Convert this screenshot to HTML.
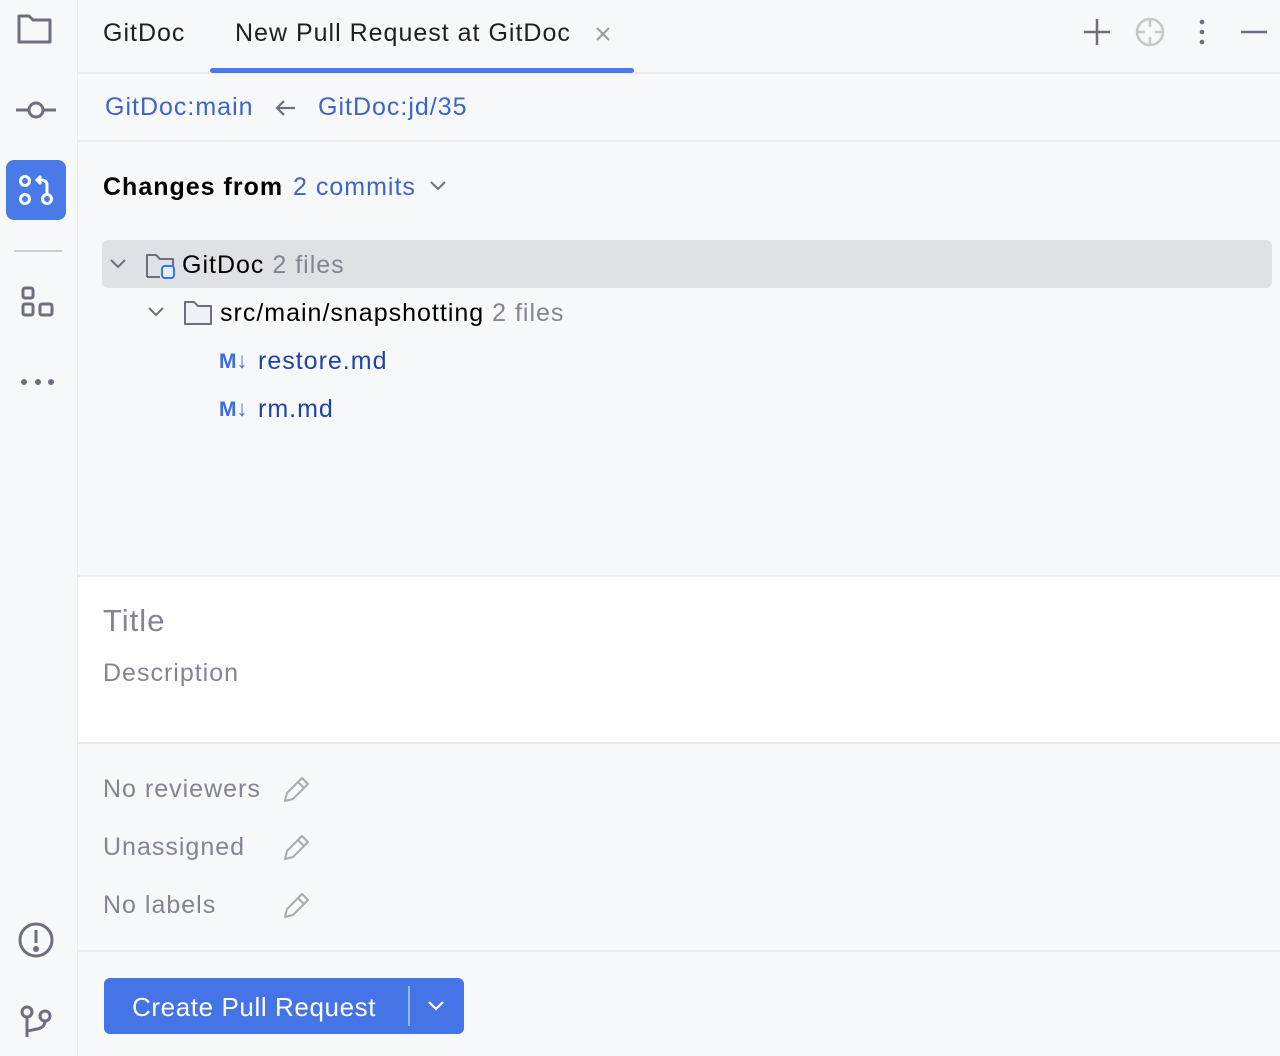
<!DOCTYPE html>
<html><head><meta charset="utf-8"><style>
*{margin:0;padding:0;box-sizing:border-box}
body{width:1280px;height:1056px;background:#f7f8fa;font-family:"Liberation Sans",sans-serif;position:relative;overflow:hidden;color:#000}
.a{position:absolute;white-space:nowrap}
.t{font-size:25px;line-height:30px;letter-spacing:1px}
.blue{color:#3b65c8}
.gray{color:#818594}
svg{position:absolute;overflow:visible}
</style></head><body>
<div class="a" style="left:77px;top:0;width:1px;height:1056px;background:#ebecf0"></div>
<div class="a" style="left:78px;top:72px;width:1202px;height:2px;background:#ebecf0"></div>
<div class="a" style="left:78px;top:140px;width:1202px;height:2px;background:#ebecf0"></div>
<div class="a" style="left:78px;top:575px;width:1202px;height:169px;background:#fff;border-top:2px solid #ebecf0;border-bottom:2px solid #ebecf0"></div>
<div class="a" style="left:78px;top:950px;width:1202px;height:2px;background:#ebecf0"></div>

<svg style="left:0;top:0" width="77" height="1056" fill="none" stroke="#6c707e" stroke-width="3">
<path d="M19 16h10l4 4h17v22H19z" stroke-linejoin="round"/>
<line x1="16" y1="110" x2="28" y2="110"/><circle cx="36" cy="110" r="7"/><line x1="44" y1="110" x2="56" y2="110"/>
<rect x="6" y="160" width="60" height="60" rx="8" fill="#4a7ae8" stroke="none"/>
<g stroke="#fff" stroke-width="3"><circle cx="25" cy="181" r="4.5"/><circle cx="25" cy="199" r="4.5"/><circle cx="47" cy="199" r="4.5"/><path d="M47 194v-9a5 5 0 0 0-5-5h-4M41 176l-4 4 4 4"/></g>
<line x1="14" y1="251" x2="62" y2="251" stroke="#c9ccd6" stroke-width="2"/>
<rect x="23" y="288" width="10" height="10" rx="2"/><rect x="23" y="304" width="10" height="11" rx="2"/><rect x="40" y="304" width="12" height="11" rx="2"/>
<g fill="#6c707e" stroke="none"><circle cx="24" cy="382" r="3"/><circle cx="38" cy="382" r="3"/><circle cx="51" cy="382" r="3"/></g>
<circle cx="36" cy="940" r="16"/><line x1="36" y1="930" x2="36" y2="943"/><circle cx="36" cy="949" r="1.5" fill="#6c707e"/>
<circle cx="27" cy="1012" r="5"/><circle cx="45" cy="1016" r="5"/><path d="M27 1017v20M45 1021c0 8-8 8-18 10"/>
</svg>

<div class="a t" style="left:103px;top:18px;color:#1e1f22">GitDoc</div>
<div class="a t" style="left:235px;top:18px;color:#1e1f22">New Pull Request at GitDoc</div>
<svg style="left:596px;top:27px" width="14" height="14" stroke="#9a9ca6" stroke-width="2"><path d="M1 1l12 12M13 1L1 13"/></svg>
<div class="a" style="left:210px;top:68px;width:424px;height:5px;background:#4a7ae8;border-radius:3px"></div>
<svg style="left:1080px;top:16px" width="190" height="34" fill="none" stroke="#6c707e" stroke-width="2.5">
<path d="M17 3v26M4 16h26"/>
<g stroke="#c5c7ce"><circle cx="70" cy="16" r="13"/><path d="M70 3v8M70 21v8M57 16h8M75 16h8"/></g>
<g fill="#6c707e" stroke="none"><circle cx="122" cy="6" r="2.3"/><circle cx="122" cy="16" r="2.3"/><circle cx="122" cy="26" r="2.3"/></g>
<path d="M161 16h26"/>
</svg>

<div class="a t blue" style="left:105px;top:92px">GitDoc:main</div>
<svg style="left:275px;top:99px" width="22" height="18" fill="none" stroke="#6c707e" stroke-width="2.2"><path d="M20 9H3M9 2L2 9l7 7"/></svg>
<div class="a t blue" style="left:318px;top:92px">GitDoc:jd/35</div>

<div class="a t" style="left:103px;top:172px;font-weight:bold">Changes from</div>
<div class="a t blue" style="left:293px;top:172px">2 commits</div>
<svg style="left:430px;top:181px" width="16" height="10" fill="none" stroke="#6c707e" stroke-width="2"><path d="M1 1l7 7 7-7"/></svg>

<div class="a" style="left:102px;top:240px;width:1170px;height:48px;background:#dfe1e5;border-radius:6px"></div>
<svg style="left:100px;top:250px" width="500" height="180" fill="none" stroke="#6c707e" stroke-width="2">
<path d="M11 10l7 7 7-7"/>
<path d="M47 27V5h9l4 4h13v8" stroke-linejoin="round"/><path d="M47 27h13"/>
<rect x="62" y="16" width="12" height="12" rx="3" fill="#e6edfd" stroke="#3574f0"/>
<path d="M49 58l7 7 7-7"/>
<path d="M85 74V52h9l4 4h13v18z" stroke-linejoin="round" fill="#f0f1f4"/>
</svg>
<div class="a t" style="left:182px;top:250px">GitDoc <span class="gray">2 files</span></div>
<div class="a t" style="left:220px;top:298px">src/main/snapshotting <span class="gray">2 files</span></div>
<div class="a" style="left:219px;top:348px;font-size:21px;font-weight:bold;color:#3d6de0">M<span style="font-size:22px">↓</span></div>
<div class="a t" style="left:258px;top:346px;color:#2043a8">restore.md</div>
<div class="a" style="left:219px;top:396px;font-size:21px;font-weight:bold;color:#3d6de0">M<span style="font-size:22px">↓</span></div>
<div class="a t" style="left:258px;top:394px;color:#2043a8">rm.md</div>

<div class="a gray" style="left:103px;top:603px;font-size:31px;line-height:36px;letter-spacing:1px">Title</div>
<div class="a t gray" style="left:103px;top:658px">Description</div>

<div class="a t gray" style="left:103px;top:774px">No reviewers</div>
<div class="a t gray" style="left:103px;top:832px">Unassigned</div>
<div class="a t gray" style="left:103px;top:890px">No labels</div>
<svg style="left:282px;top:776px" width="30" height="140" fill="none" stroke="#a8abb5" stroke-width="2" stroke-linejoin="round">
<path d="M3 25l2-8 15-15 6 6-15 15zM16 6l6 6"/>
<path transform="translate(0,58)" d="M3 25l2-8 15-15 6 6-15 15zM16 6l6 6"/>
<path transform="translate(0,116)" d="M3 25l2-8 15-15 6 6-15 15zM16 6l6 6"/>
</svg>

<div class="a" style="left:104px;top:978px;width:360px;height:56px;background:#4574e6;border-radius:6px"></div>
<div class="a" style="left:132px;top:992px;font-size:26px;line-height:30px;color:#fff;letter-spacing:0.6px">Create Pull Request</div>
<div class="a" style="left:408px;top:986px;width:2px;height:40px;background:#9ab4f2"></div>
<svg style="left:428px;top:1001px" width="16" height="10" fill="none" stroke="#fff" stroke-width="2.2"><path d="M1 1l7 7 7-7"/></svg>
</body></html>
